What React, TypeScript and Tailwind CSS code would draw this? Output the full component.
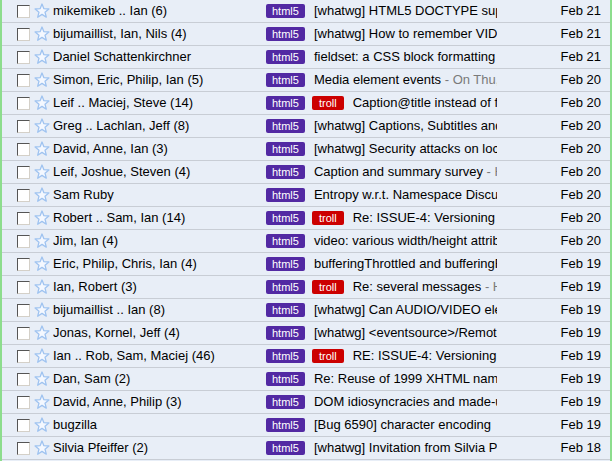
import React from "react";

type Row = {
    from: string;
    troll?: boolean;
    subject: string;
    snippet?: string;
    date: string;
};

const rows: Row[] = [
    { from: "mikemikeb .. Ian (6)", subject: "[whatwg] HTML5 DOCTYPE support", date: "Feb 21" },
    { from: "bijumaillist, Ian, Nils (4)", subject: "[whatwg] How to remember VIDEO", date: "Feb 21" },
    { from: "Daniel Schattenkirchner", subject: "fieldset: a CSS block formatting context", date: "Feb 21" },
    { from: "Simon, Eric, Philip, Ian (5)", subject: "Media element events", snippet: " - On Thu, Feb", date: "Feb 20" },
    { from: "Leif .. Maciej, Steve (14)", troll: true, subject: "Caption@title instead of figcaption", date: "Feb 20" },
    { from: "Greg .. Lachlan, Jeff (8)", subject: "[whatwg] Captions, Subtitles and", date: "Feb 20" },
    { from: "David, Anne, Ian (3)", subject: "[whatwg] Security attacks on local", date: "Feb 20" },
    { from: "Leif, Joshue, Steven (4)", subject: "Caption and summary survey", snippet: " - Hi all", date: "Feb 20" },
    { from: "Sam Ruby", subject: "Entropy w.r.t. Namespace Discussion", date: "Feb 20" },
    { from: "Robert .. Sam, Ian (14)", troll: true, subject: "Re: ISSUE-4: Versioning", date: "Feb 20" },
    { from: "Jim, Ian (4)", subject: "video: various width/height attributes", date: "Feb 20" },
    { from: "Eric, Philip, Chris, Ian (4)", subject: "bufferingThrottled and bufferingRate", date: "Feb 19" },
    { from: "Ian, Robert (3)", troll: true, subject: "Re: several messages", snippet: " - Hi", date: "Feb 19" },
    { from: "bijumaillist .. Ian (8)", subject: "[whatwg] Can AUDIO/VIDEO elements", date: "Feb 19" },
    { from: "Jonas, Kornel, Jeff (4)", subject: "[whatwg] <eventsource>/RemoteEvent", date: "Feb 19" },
    { from: "Ian .. Rob, Sam, Maciej (46)", troll: true, subject: "RE: ISSUE-4: Versioning", date: "Feb 19" },
    { from: "Dan, Sam (2)", subject: "Re: Reuse of 1999 XHTML namespace", date: "Feb 19" },
    { from: "David, Anne, Philip (3)", subject: "DOM idiosyncracies and made-up", date: "Feb 19" },
    { from: "bugzilla", subject: "[Bug 6590] character encoding", date: "Feb 19" },
    { from: "Silvia Pfeiffer (2)", subject: "[whatwg] Invitation from Silvia Pfeiffer", date: "Feb 18" },
];

function Star() {
    return (
        <svg width="16" height="16" viewBox="0 0 16 16" className="block">
            <path
                d="M8 1 L9.9 5.7 L14.9 6 L11 9.2 L12.3 14.2 L8 11.4 L3.7 14.2 L5 9.2 L1.1 6 L6.1 5.7 Z"
                fill="#f4f8ff"
                stroke="#9fc3f0"
                strokeWidth="1.3"
                strokeLinejoin="round"
            />
        </svg>
    );
}

function Checkbox() {
    return (
        <div className="w-[13px] h-[13px] bg-white border border-t-[#555] border-l-[#555] border-b-[#d4d0c8] border-r-[#d4d0c8]" />
    );
}

function Label({ text, color }: { text: string; color: string }) {
    return (
        <span
            className={`shrink-0 h-[14px] leading-[14px] rounded-[2px] text-white text-[11px] ${color}`}
        >
            {text}
        </span>
    );
}

export default function App() {
    return (
        <div
            className="w-[612px] h-[461px] bg-[#e8eef7] border-l-2 border-r-2 border-[#8ddd8d] overflow-hidden text-[13px] text-black"
            style={{ fontFamily: '"Liberation Sans", Arial, sans-serif' }}
        >
            {rows.map((r, i) => (
                <div
                    key={i}
                    className="flex items-center h-[23px] border-b border-[#c8cdd5] whitespace-nowrap"
                >
                    <div className="w-[51px] flex items-center pl-[15px] gap-[4px] shrink-0">
                        <Checkbox />
                        <Star />
                    </div>
                    <div className="w-[213px] shrink-0 overflow-hidden">{r.from}</div>
                    <div className="w-[231px] shrink-0 flex items-center overflow-hidden">
                        <Label text="html5" color="bg-[#5229a3] px-[6px]" />
                        {r.troll && (
                            <span className="ml-[7px] flex">
                                <Label text="troll" color="bg-[#cc0000] px-[7px]" />
                            </span>
                        )}
                        <span className="ml-[9px]">
                            {r.subject}
                            {r.snippet && <span className="text-[#7a7a7a]">{r.snippet}</span>}
                        </span>
                    </div>
                    <div className="flex-1 text-right pr-[9px]">{r.date}</div>
                </div>
            ))}
        </div>
    );
}
